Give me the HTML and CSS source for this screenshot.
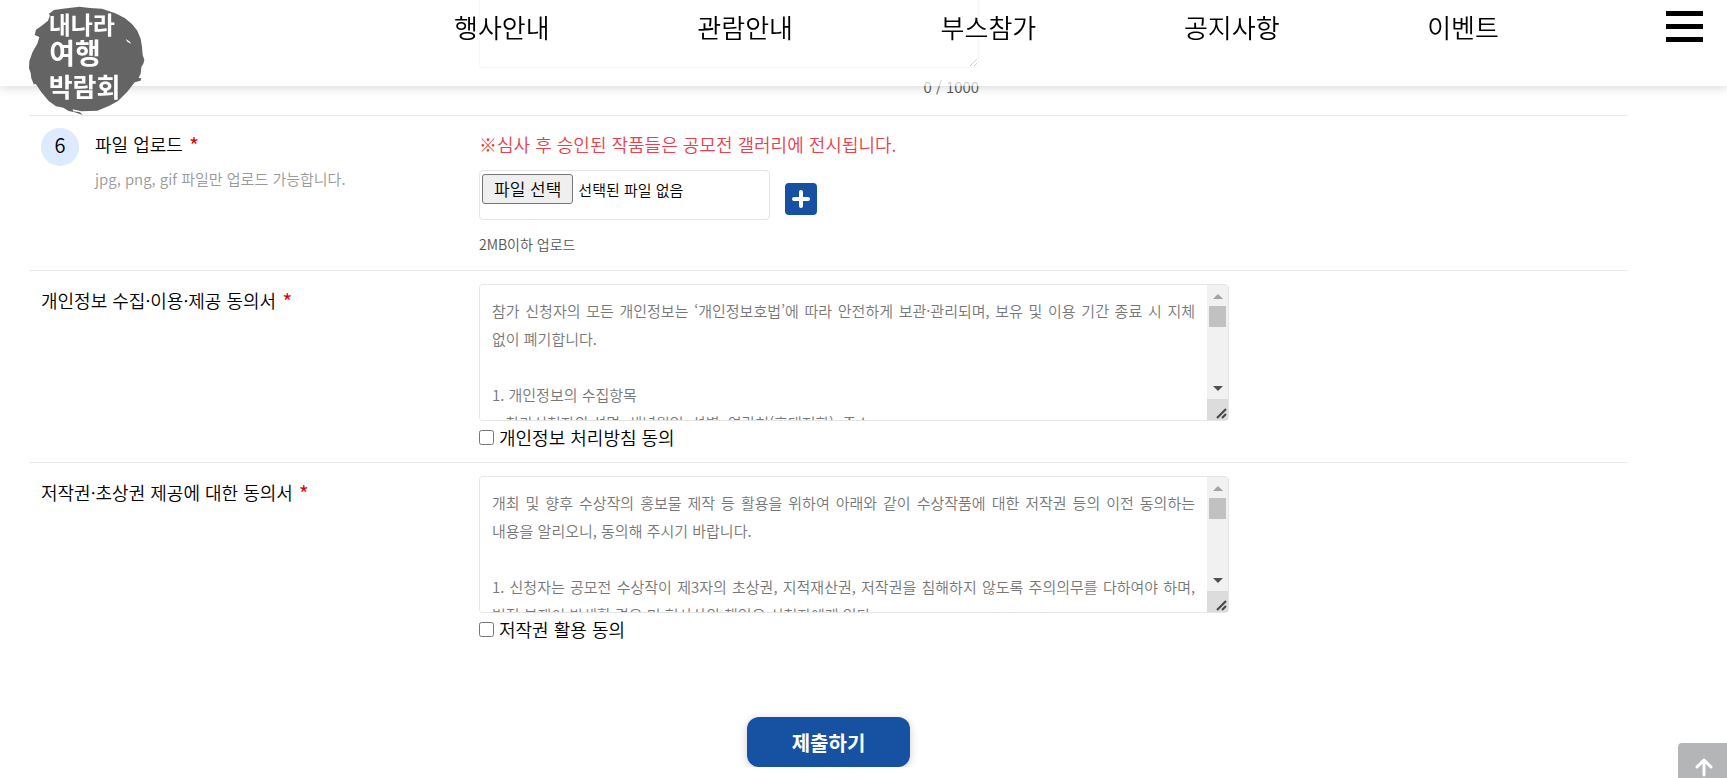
FILE: index.html
```html
<!DOCTYPE html>
<html lang="ko">
<head>
    <meta charset="UTF-8">
    <meta name="viewport" content="width=device-width, initial-scale=1.0">
    <title>내나라 여행박람회</title>
    <link rel="stylesheet" href="styles.css">
</head>
<body>

    <!-- 상단 메뉴 -->
    <header class="header">
        <a href="#" class="logo" aria-label="내나라 여행박람회">
            <svg viewBox="0 0 354 340">
                <path fill="#646464" d="M62 27 L78 15 L104 11 L142 7 L154 5 L186 9 L222 11 L262 25 L290 39 L312 57 L328 77 L338 101 L342 125 L344 150 L349 164 L346 176 L340 186 L338 206 L332 219 L340 220 L338 227 L320 232 L298 260 L270 288 L244 302 L208 317 L160 319 L134 313 L136 319 L156 322 L164 330 L140 322 L122 318 L106 308 L84 304 L62 288 L40 262 L24 238 L19 236 L18 240 L10 220 L8 204 L3 190 L4 168 L14 140 L28 116 L34 96 L20 90 L24 74 L44 60 L60 47 L66 31 Z"/>
                <path fill="#fff" d="M293 102 L306 110 L309 116 L298 110 Z"/>
                <g class="logo-text">
                    <text x="62" y="86">내나라</text>
                    <text class="logo-mid" x="64" y="176">여행</text>
                    <text class="logo-big" x="62" y="276">박람회</text>
                </g>
            </svg>
        </a>
        <nav class="nav">
            <a href="#">행사안내</a>
            <a href="#">관람안내</a>
            <a href="#">부스참가</a>
            <a href="#">공지사항</a>
            <a href="#">이벤트</a>
        </nav>
        <button type="button" class="menu-btn" aria-label="전체메뉴">
            <span></span>
            <span></span>
            <span></span>
        </button>
    </header>

    <form class="apply-form">
        <!-- 작품 설명 -->
        <div class="row row-first">
            <div class="row-head"></div>
            <div class="row-body">
                <div class="desc">
                    <textarea class="desc-text" aria-label="작품 설명"></textarea>
                    <p class="count">0 / 1000</p>
                </div>
            </div>
        </div>

        <!-- 파일 업로드 -->
        <div class="row row-file">
            <div class="row-head">
                <span class="num">6</span>
                <div>
                    <label for="file">파일 업로드 <em>*</em></label>
                    <p class="hint">jpg, png, gif 파일만 업로드 가능합니다.</p>
                </div>
            </div>
            <div class="row-body">
                <p class="notice">※심사 후 승인된 작품들은 공모전 갤러리에 전시됩니다.</p>
                <div class="file-line">
                    <div class="file-box">
                        <span class="file-btn">파일 선택</span>
                        <span class="file-name">선택된 파일 없음</span>
                        <input type="file" id="file" name="file" accept=".jpg,.png,.gif">
                    </div>
                    <button type="button" class="add-btn" aria-label="파일 추가">
                        <svg viewBox="0 0 20 20"><path d="M10 3v14M3 10h14"/></svg>
                    </button>
                </div>
                <p class="limit">2MB이하 업로드</p>
            </div>
        </div>

        <!-- 개인정보 동의 -->
        <div class="row">
            <div class="row-head">
                <label for="privacy">개인정보 수집·이용·제공 동의서 <em>*</em></label>
            </div>
            <div class="row-body">
                <div class="terms-box">
                    <textarea class="terms" id="privacy" readonly>참가 신청자의 모든 개인정보는 ‘개인정보호법’에 따라 안전하게 보관·관리되며, 보유 및 이용 기간 종료 시 지체 없이 폐기합니다.

1. 개인정보의 수집항목
 - 참가신청자의 성명, 생년월일, 성별, 연락처(휴대전화), 주소</textarea>
                    <div class="scroll" aria-hidden="true">
                        <span class="scroll-up"></span>
                        <span class="scroll-thumb"></span>
                        <span class="scroll-down"></span>
                        <span class="scroll-corner">
                            <svg viewBox="0 0 21 21"><path d="M10 19L19 10M15 19l4-4"/></svg>
                        </span>
                    </div>
                </div>
                <div class="agree">
                    <input type="checkbox" id="agree1" name="agree1">
                    <label for="agree1">개인정보 처리방침 동의</label>
                </div>
            </div>
        </div>

        <!-- 저작권 동의 -->
        <div class="row">
            <div class="row-head">
                <label for="copyright">저작권·초상권 제공에 대한 동의서 <em>*</em></label>
            </div>
            <div class="row-body">
                <div class="terms-box">
                    <textarea class="terms" id="copyright" readonly>개최 및 향후 수상작의 홍보물 제작 등 활용을 위하여 아래와 같이 수상작품에 대한 저작권 등의 이전 동의하는 내용을 알리오니, 동의해 주시기 바랍니다.

1. 신청자는 공모전 수상작이 제3자의 초상권, 지적재산권, 저작권을 침해하지 않도록 주의의무를 다하여야 하며, 법적 분쟁이 발생할 경우 민·형사상의 책임은 신청자에게 있다.</textarea>
                    <div class="scroll" aria-hidden="true">
                        <span class="scroll-up"></span>
                        <span class="scroll-thumb"></span>
                        <span class="scroll-down"></span>
                        <span class="scroll-corner">
                            <svg viewBox="0 0 21 21"><path d="M10 19L19 10M15 19l4-4"/></svg>
                        </span>
                    </div>
                </div>
                <div class="agree">
                    <input type="checkbox" id="agree2" name="agree2">
                    <label for="agree2">저작권 활용 동의</label>
                </div>
            </div>
        </div>

        <div class="submit">
            <button type="submit">제출하기</button>
        </div>
    </form>

    <a href="#" class="top-btn" aria-label="맨 위로">
        <svg viewBox="0 0 20 20"><path d="M10 18V3M3 10l7-7 7 7"/></svg>
    </a>

</body>
</html>
```
FILE: styles.css
```css
* {
    box-sizing: border-box;
}
body {
    margin: 0;
    background-color: #fff;
    color: #000;
    font-family: "Noto Sans CJK KR", "Noto Sans", sans-serif;
    font-size: 18px;
    font-weight: 350;
    line-height: 32px;
}
p {
    margin: 0;
}
a {
    color: inherit;
    text-decoration: none;
}
button, textarea {
    font-family: inherit;
}

/* 상단 메뉴 */
.header {
    position: fixed;
    top: 0;
    left: 0;
    z-index: 10;
    display: flex;
    align-items: flex-start;
    width: 100%;
    height: 86px;
    padding: 0 24px 0 28px;
    background-color: rgba(255, 255, 255, 0.7);
    box-shadow: 0 2px 10px rgba(0, 0, 0, 0.15);
}
.logo {
    width: 118px;
    margin-top: 5px;
}
.logo svg {
    display: block;
    width: 100%;
}
.logo-text {
    fill: #fff;
    font-size: 72px;
    font-weight: 700;
}
.logo-mid {
    font-size: 84px;
}
.logo-big {
    font-size: 78px;
}
.nav {
    display: flex;
    flex: 1;
    justify-content: space-between;
    margin: 7px 167px 0 308px;
    font-size: 26px;
    line-height: 40px;
}
.menu-btn {
    display: flex;
    flex-direction: column;
    gap: 8px;
    width: 37px;
    margin-top: 11px;
    padding: 0;
    border: none;
    background: none;
    cursor: pointer;
}
.menu-btn span {
    width: 100%;
    height: 5px;
    background-color: #000;
}

/* 신청 폼 */
.apply-form {
    margin: 0 99px 0 29px;
}
.row {
    display: flex;
    padding: 13px 0 9px 12px;
    border-top: 1px solid #eaeaea;
}
.row-head {
    display: flex;
    gap: 16px;
    width: 438px;
}
.row-head em {
    margin-left: 1px;
    color: #d00;
    font-size: 22px;
    font-style: normal;
    line-height: 16px;
    vertical-align: -3px;
}
.row-body {
    flex: 1;
}
.row-first {
    padding-top: 0;
    padding-bottom: 12px;
    border-top: none;
}
.row-file {
    padding-top: 12px;
    padding-bottom: 10px;
}
.desc {
    width: 500px;
}
.desc-text {
    display: block;
    width: 100%;
    height: 68px;
    border: 1px solid #e5e5e5;
    border-top: none;
    border-radius: 0 0 4px 4px;
}
.count {
    padding-top: 3px;
    color: #555;
    font-size: 15px;
    text-align: right;
}
.num {
    width: 38px;
    height: 38px;
    border-radius: 50%;
    background-color: #dcebff;
    font-size: 20px;
    line-height: 34px;
    text-align: center;
}
.hint {
    padding-top: 3px;
    color: #999;
    font-size: 15px;
}
.notice {
    color: #ea404c;
}
.file-line {
    display: flex;
    gap: 15px;
    margin-top: 10px;
}
.file-box {
    position: relative;
    display: flex;
    gap: 5px;
    width: 291px;
    height: 50px;
    padding: 3px 2px;
    border: 1px solid #e5e5e5;
    border-radius: 4px;
}
.file-btn {
    height: 30px;
    padding: 0 11px;
    border: 1px solid #767676;
    border-radius: 3px;
    background-color: #efefef;
    font-size: 17px;
    line-height: 28px;
}
.file-name {
    font-size: 15px;
}
.file-box input {
    position: absolute;
    top: 0;
    left: 0;
    width: 100%;
    height: 100%;
    opacity: 0;
    cursor: pointer;
}
.add-btn {
    width: 32px;
    height: 32px;
    margin-top: 13px;
    padding: 6px;
    border: none;
    border-radius: 4px;
    background-color: #1751a2;
    cursor: pointer;
}
.add-btn svg, .top-btn svg {
    display: block;
    width: 20px;
    height: 20px;
    fill: none;
    stroke: #fff;
    stroke-width: 4;
    stroke-linecap: round;
    stroke-linejoin: round;
}
.limit {
    margin-top: 8px;
    color: #555;
    font-size: 14px;
}

/* 약관 */
.terms-box {
    position: relative;
    width: 750px;
    max-width: 100%;
}
.terms {
    display: block;
    width: 100%;
    height: 137px;
    padding: 12px 33px 12px 12px;
    border: 1px solid #e5e5e5;
    border-radius: 4px;
    color: #777;
    font-size: 15px;
    font-weight: 350;
    line-height: 28px;
    text-align: justify;
    word-break: keep-all;
    resize: none;
}
.scroll {
    position: absolute;
    top: 1px;
    right: 1px;
    bottom: 1px;
    display: flex;
    flex-direction: column;
    align-items: center;
    width: 21px;
    background-color: #f1f1f1;
}
.scroll-up {
    margin: 9px 0 7px;
    border: 5px solid transparent;
    border-top: none;
    border-bottom-color: #a3a3a3;
}
.scroll-thumb {
    width: 17px;
    height: 21px;
    background-color: #c1c1c1;
}
.scroll-down {
    margin: auto 0 8px;
    border: 5px solid transparent;
    border-bottom: none;
    border-top-color: #505050;
}
.scroll-corner {
    width: 21px;
    height: 21px;
    background-color: #dcdcdc;
}
.scroll-corner svg {
    display: block;
    fill: none;
    stroke: #444;
    stroke-width: 2;
}
.agree {
    display: flex;
    align-items: center;
    gap: 5px;
}
.agree input {
    width: 15px;
    height: 15px;
    margin: 0;
}

.submit {
    padding-top: 63px;
    text-align: center;
}
.submit button {
    width: 163px;
    height: 50px;
    border: none;
    border-radius: 12px;
    background-color: #1751a2;
    box-shadow: 0 2px 8px rgba(0, 0, 0, 0.2);
    color: #fff;
    font-size: 20px;
    font-weight: 700;
    cursor: pointer;
}

/* 맨 위로 */
.top-btn {
    position: fixed;
    right: -3px;
    bottom: -13px;
    display: flex;
    align-items: center;
    justify-content: center;
    width: 52px;
    height: 48px;
    border-radius: 4px;
    background-color: #b4b5b7;
}
.top-btn svg {
    stroke-width: 3;
}
```
